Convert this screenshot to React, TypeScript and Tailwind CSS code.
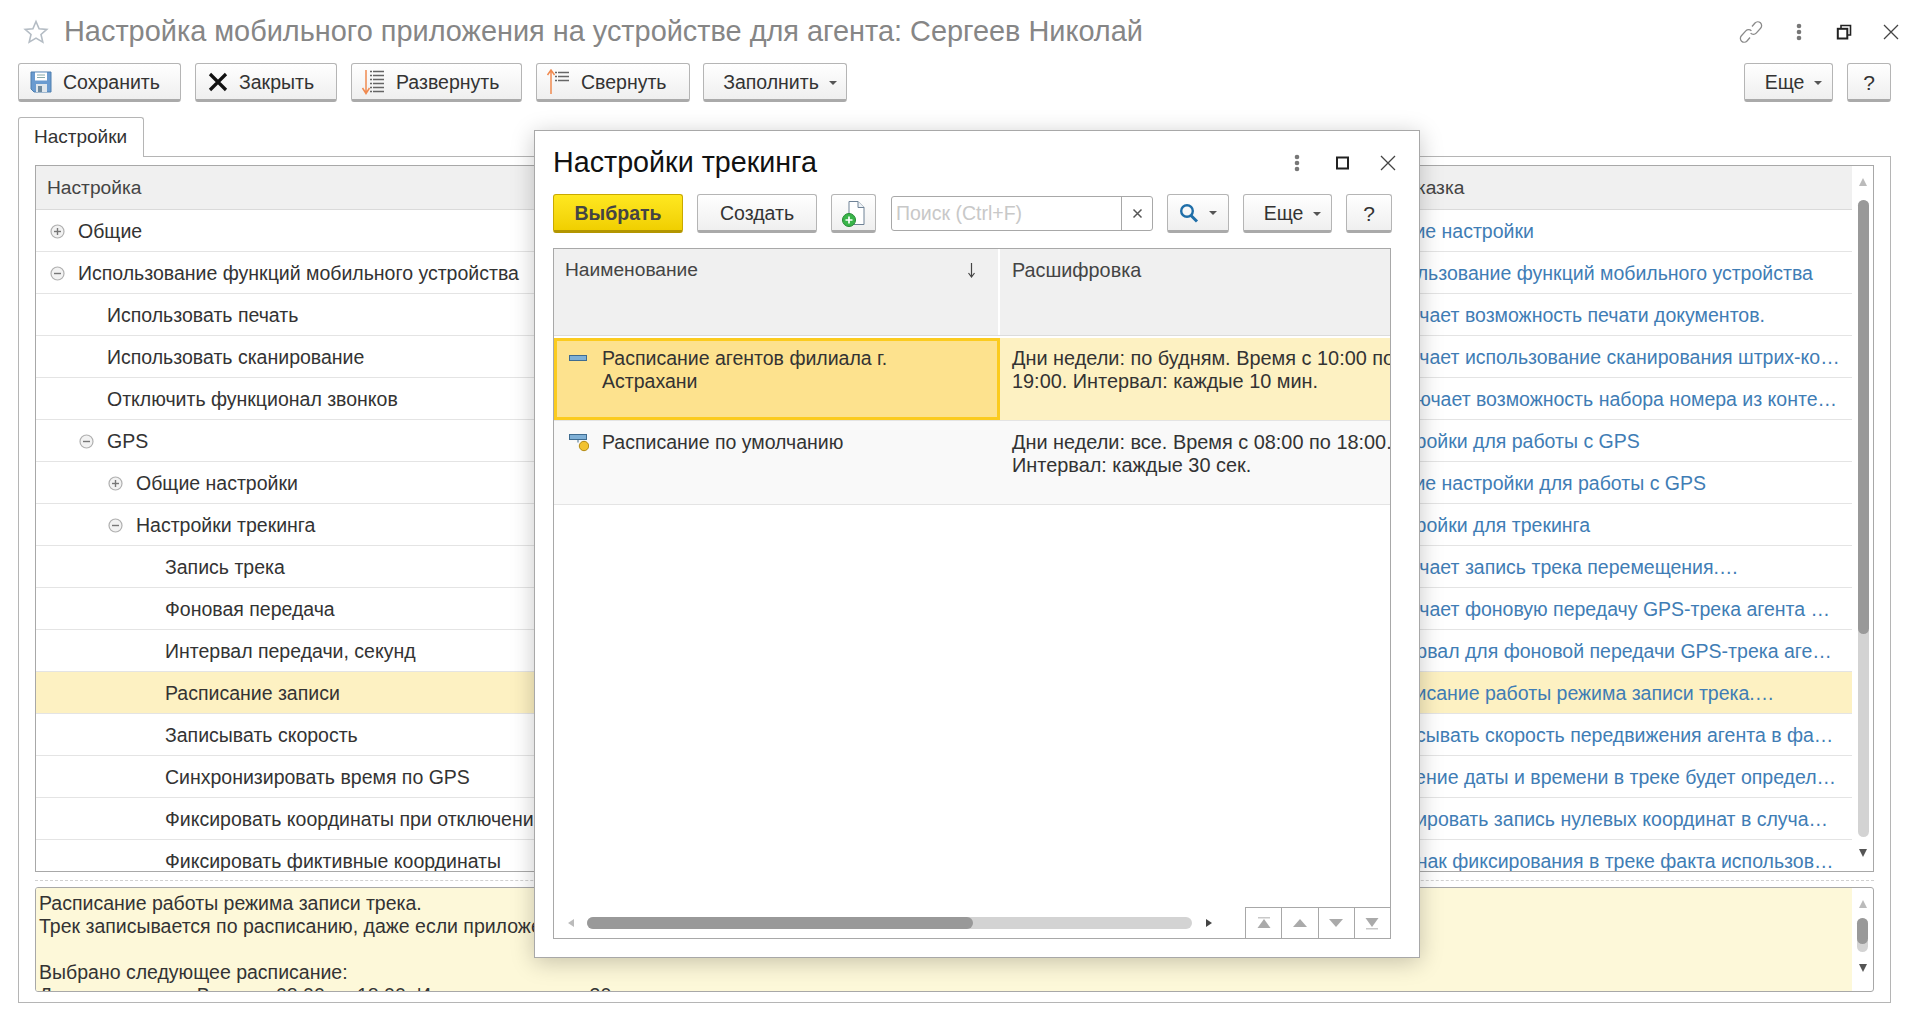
import type { ReactNode } from 'react';

const treeRows = [
  { label: 'Общие', level: 0, toggle: 'plus', hint: 'Общие настройки' },
  { label: 'Использование функций мобильного устройства', level: 0, toggle: 'minus', hint: 'Использование функций мобильного устройства' },
  { label: 'Использовать печать', level: 1, hint: 'Включает возможность печати документов.' },
  { label: 'Использовать сканирование', level: 1, hint: 'Включает использование сканирования штрих-ко…' },
  { label: 'Отключить функционал звонков', level: 1, hint: 'Отключает возможность набора номера из конте…' },
  { label: 'GPS', level: 1, toggle: 'minus', hint: 'Настройки для работы с GPS' },
  { label: 'Общие настройки', level: 2, toggle: 'plus', hint: 'Общие настройки для работы с GPS' },
  { label: 'Настройки трекинга', level: 2, toggle: 'minus', hint: 'Настройки для трекинга' },
  { label: 'Запись трека', level: 3, hint: 'Включает запись трека перемещения.…' },
  { label: 'Фоновая передача', level: 3, hint: 'Включает фоновую передачу GPS-трека агента …' },
  { label: 'Интервал передачи, секунд', level: 3, hint: 'Интервал для фоновой передачи GPS-трека аге…' },
  { label: 'Расписание записи', level: 3, hint: 'Расписание работы режима записи трека.…', selected: true },
  { label: 'Записывать скорость', level: 3, hint: 'Записывать скорость передвижения агента в фа…' },
  { label: 'Синхронизировать время по GPS', level: 3, hint: 'Значение даты и времени в треке будет определ…' },
  { label: 'Фиксировать координаты при отключении GPS', level: 3, hint: 'Фиксировать запись нулевых координат в случа…' },
  { label: 'Фиксировать фиктивные координаты', level: 3, hint: 'Признак фиксирования в треке факта использов…' },
];

const levelPadding = ['pl-[42px]', 'pl-[71px]', 'pl-[100px]', 'pl-[129px]'];
const togglePadding = ['pl-[14px]', 'pl-[43px]', 'pl-[72px]', 'pl-[101px]'];

function Btn({ className, children }: { className: string; children: ReactNode }) {
  return (
    <div
      className={`flex h-[39px] shrink-0 items-center rounded-[3px] border border-[#b5b5b5] border-b-[3px] border-b-[#aaaaaa] bg-gradient-to-b from-white to-[#efefef] pt-[2px] text-[19.5px] text-[#333] ${className}`}
    >
      {children}
    </div>
  );
}

function Caret() {
  return <span className="ml-[10px] h-0 w-0 border-x-[4px] border-t-[4px] border-x-transparent border-t-[#555]" />;
}

function Toggle({ type }: { type: string }) {
  return (
    <svg width="15" height="15" viewBox="0 0 15 15" className="shrink-0">
      <circle cx="7.5" cy="7.5" r="6.5" fill="#f2f2f2" stroke="#b0b0b0" strokeWidth="1.2" />
      <path d="M4 7.5h7" stroke="#777" strokeWidth="1.4" />
      {type === 'plus' && <path d="M7.5 4v7" stroke="#777" strokeWidth="1.4" />}
    </svg>
  );
}

function Dots() {
  return (
    <svg width="6" height="18" viewBox="0 0 6 18">
      <circle cx="3" cy="3" r="2.3" fill="#777" />
      <circle cx="3" cy="9" r="2.3" fill="#777" />
      <circle cx="3" cy="15" r="2.3" fill="#777" />
    </svg>
  );
}

function Cross({ size = 16 }: { size?: number }) {
  return (
    <svg width={size} height={size} viewBox="0 0 16 16">
      <path d="M1 1l14 14M15 1L1 15" stroke="#444" strokeWidth="1.3" />
    </svg>
  );
}

function ArrowUp({ color = '#bbb' }: { color?: string }) {
  return (
    <svg width="8" height="8" viewBox="0 0 8 8">
      <path d="M4 0l4 8H0z" fill={color} />
    </svg>
  );
}

function ArrowDown({ color = '#555' }: { color?: string }) {
  return (
    <svg width="8" height="8" viewBox="0 0 8 8">
      <path d="M0 0h8L4 8z" fill={color} />
    </svg>
  );
}

function ListIcon({ rows, top }: { rows: number; top: number }) {
  const lines = [];
  for (let i = 0; i < rows; i++) {
    lines.push(<path key={i} d={`M9 ${top + i * 4 + 0.5}h2M12 ${top + i * 4 + 0.5}h11`} stroke="#666" strokeWidth="1.6" />);
  }
  return <>{lines}</>;
}

function NavCell({ children }: { children: ReactNode }) {
  return (
    <div className="flex h-full flex-1 items-center justify-center border-l border-[#a8a8a8]">
      <svg width="18" height="16" viewBox="0 0 18 16">
        {children}
      </svg>
    </div>
  );
}

function TrackingDialog() {
  return (
    <div className="absolute left-[534px] top-[130px] flex h-[828px] w-[886px] flex-col border border-[#a8a8a8] bg-white pl-[18px] pr-[19px] shadow-[0_4px_22px_rgba(0,0,0,0.22)]">
      <div className="flex h-[63px] shrink-0 items-center justify-between">
        <div className="text-[28.7px] text-[#111]">Настройки трекинга</div>
        <div className="mr-[4px] flex items-center">
          <Dots />
          <svg width="14" height="14" viewBox="0 0 14 14" className="ml-[36px]">
            <rect x="1" y="1.5" width="11" height="11" fill="none" stroke="#222" strokeWidth="2" />
          </svg>
          <div className="ml-[30px]"><Cross /></div>
        </div>
      </div>

      <div className="flex h-[39px] shrink-0 items-start">
        <Btn className="w-[130px] justify-center !border-[#c9a900] !border-b-[#b39600] !from-[#ffe81f] !to-[#f0cf00] font-bold !text-[#444]">Выбрать</Btn>
        <Btn className="ml-[14px] w-[120px] justify-center">Создать</Btn>
        <Btn className="ml-[14px] w-[45px] justify-center !pt-0">
          <svg width="26" height="28" viewBox="0 0 26 28">
            <path d="M8 2.5h9l6 6v17H8z" fill="#fff" stroke="#6f8296" />
            <path d="M17 2.500v6h6" fill="#eef2f6" stroke="#6f8296" />
            <circle cx="8" cy="21" r="6.5" fill="#3ab54a" stroke="#258a33" />
            <path d="M4.500 21h7M8 17.500v7" stroke="#fff" strokeWidth="1.7" />
          </svg>
        </Btn>
        <div className="ml-[15px] mt-[2px] flex h-[35px] w-[262px] items-stretch rounded-[3px] border border-[#a8a8a8]">
          <div className="flex-1 pl-[4px] text-[19.5px] leading-[33px] text-[#c8c8c8]">Поиск (Ctrl+F)</div>
          <div className="flex w-[31px] items-center justify-center border-l border-[#a8a8a8]">
            <svg width="11" height="11" viewBox="0 0 11 11">
              <path d="M1.500 1.500l8 8M9.500 1.500l-8 8" stroke="#555" strokeWidth="1.5" />
            </svg>
          </div>
        </div>
        <Btn className="ml-[14px] w-[62px] justify-center !pt-0">
          <svg width="20" height="20" viewBox="0 0 20 20">
            <circle cx="8" cy="8" r="5.800" fill="none" stroke="#1f6ea8" strokeWidth="2.4" />
            <path d="M12 12.500l6 6" stroke="#1f6ea8" strokeWidth="3" />
          </svg>
          <Caret />
        </Btn>
        <Btn className="ml-[14px] w-[89px] justify-center pl-[10px]">Еще<Caret /></Btn>
        <Btn className="ml-[14px] w-[46px] justify-center text-[21px]">?</Btn>
      </div>

      <div className="mt-[15px] flex h-[691px] w-[838px] shrink-0 flex-col border border-[#a8a8a8]">
        <div className="grid h-[87px] shrink-0 grid-cols-[446px_1fr] border-b border-[#dcdcdc] bg-[#f0f0f0] text-[19.2px] leading-[22px] text-[#444]">
          <div className="flex justify-between border-r-2 border-white pl-[11px] pr-[22px] pt-[10px]">
            <span>Наименование</span>
            <svg width="9" height="16" viewBox="0 0 9 16" className="mt-[3px]">
              <path d="M4.500 1v13M1.500 11l3 4 3-4" fill="none" stroke="#444" strokeWidth="1.2" />
            </svg>
          </div>
          <div className="pl-[12px] pt-[10px] text-[19.8px]">Расшифровка</div>
        </div>

        <div className="mt-[2px] grid h-[82px] shrink-0 grid-cols-[446px_1fr] text-[19.5px] leading-[23px] text-[#333]">
          <div className="flex border-[3px] border-[#fbcb1f] bg-[#fde28e] pl-[12px] pt-[6px]">
            <svg width="20" height="12" viewBox="0 0 20 12" className="mt-[8px] shrink-0">
              <rect x="0.500" y="0.500" width="17" height="5" fill="#7fb0d6" stroke="#3f6c90" />
            </svg>
            <span className="ml-[13px] w-[340px]">Расписание агентов филиала г. Астрахани</span>
          </div>
          <div className="whitespace-pre overflow-hidden bg-[#fdf1c2] pl-[12px] pt-[9px] text-[19.9px]">{'Дни недели: по будням. Время с 10:00 по\n19:00. Интервал: каждые 10 мин.'}</div>
        </div>

        <div className="grid h-[85px] shrink-0 grid-cols-[446px_1fr] border-y border-[#e4e4e4] bg-[#f9f9f9] text-[19.5px] leading-[23px] text-[#333]">
          <div className="flex pl-[15px] pt-[10px]">
            <svg width="20" height="20" viewBox="0 0 20 20" className="mt-[3px] shrink-0">
              <rect x="0.500" y="0.500" width="17" height="5" fill="#7fb0d6" stroke="#3f6c90" />
              <path d="M9 5.500v3" stroke="#3f6c90" />
              <circle cx="15" cy="12" r="4.700" fill="#f2c230" stroke="#b38a12" />
            </svg>
            <span className="ml-[13px]">Расписание по умолчанию</span>
          </div>
          <div className="whitespace-pre overflow-hidden pl-[12px] pt-[10px] text-[19.9px]">{'Дни недели: все. Время с 08:00 по 18:00.\nИнтервал: каждые 30 сек.'}</div>
        </div>

        <div className="flex-1" />

        <div className="flex h-[31px] shrink-0 items-center">
          <div className="flex flex-1 items-center pl-[14px]">
            <svg width="6" height="8" viewBox="0 0 6 8"><path d="M6 0v8L0 4z" fill="#bbb" /></svg>
            <div className="ml-[13px] h-[12px] w-[605px] rounded-full bg-[#d3d3d3]">
              <div className="h-full w-[386px] rounded-full bg-[#999]" />
            </div>
            <svg width="6" height="8" viewBox="0 0 6 8" className="ml-[14px]"><path d="M0 0v8l6-4z" fill="#444" /></svg>
          </div>
          <div className="flex h-full w-[145px] border-t border-[#a8a8a8]">
            <NavCell><path d="M3 2h12v1.500H3z" fill="#c8c8c8" /><path d="M9 4l6.500 9h-13z" fill="#aaa" /></NavCell>
            <NavCell><path d="M9 4l7 8H2z" fill="#aaa" /></NavCell>
            <NavCell><path d="M2 4h14l-7 8z" fill="#aaa" /></NavCell>
            <NavCell><path d="M2.500 3h13L9 12z" fill="#aaa" /><path d="M3 13h12v1.500H3z" fill="#c8c8c8" /></NavCell>
          </div>
        </div>
      </div>
    </div>
  );
}

export default function App() {
  return (
    <div className="relative h-[1017px] w-[1920px] overflow-hidden bg-white font-['Liberation_Sans',Arial,sans-serif]">
      {/* Title */}
      <div className="flex h-[63px] items-center pl-[23px] pr-[21px]">
        <svg width="26" height="26" viewBox="0 0 26 26" className="shrink-0">
          <path d="M13 2.500l3.100 7.200 7.700.7-5.800 5.100 1.800 7.600-6.800-4-6.800 4 1.800-7.600-5.800-5.100 7.700-.7z" fill="none" stroke="#b4bcc4" strokeWidth="1.6" />
        </svg>
        <div className="ml-[15px] text-[28.9px] text-[#868686]">Настройка мобильного приложения на устройстве для агента: Сергеев Николай</div>
        <div className="ml-auto flex items-center">
          <svg width="26" height="26" viewBox="0 0 26 26" fill="none" stroke="#8a8a8a" strokeWidth="1.3">
            <path d="M14 7.500l3-3.500a3.800 3.800 0 0 1 5.600 5.200l-4.400 4.900a3.800 3.800 0 0 1-5.600 0" />
            <path d="M12 18.500l-3 3.500a3.800 3.800 0 0 1-5.600-5.200l4.400-4.900a3.800 3.800 0 0 1 5.600 0" />
          </svg>
          <div className="ml-[32px]"><Dots /></div>
          <svg width="16" height="16" viewBox="0 0 16 16" className="ml-[34px]">
            <path d="M5 4V1.500h9.500V11H12" fill="none" stroke="#222" strokeWidth="1.6" />
            <rect x="1.800" y="4.800" width="9.500" height="9.700" fill="none" stroke="#222" strokeWidth="2" />
          </svg>
          <div className="ml-[31px]"><Cross /></div>
        </div>
      </div>

      {/* Toolbar */}
      <div className="flex h-[39px] pl-[18px] pr-[29px]">
        <Btn className="w-[163px] pl-[11px] !pt-0">
          <svg width="22" height="22" viewBox="0 0 22 22" className="shrink-0">
            <path d="M1 1h20v20H4l-3-3z" fill="#6a9bd0" stroke="#4f7fae" />
            <rect x="5" y="1.500" width="12" height="8" fill="#fff" />
            <path d="M7 4h8M7 6.500h8" stroke="#8aa" strokeWidth="1" />
            <rect x="6" y="13" width="11" height="8" fill="#dfe6ec" />
            <rect x="8" y="15" width="4" height="6" fill="#6f8a9e" />
          </svg>
          <span className="ml-[11px] pt-[2px]">Сохранить</span>
        </Btn>
        <Btn className="ml-[14px] w-[142px] pl-[12px] !pt-0">
          <svg width="20" height="20" viewBox="0 0 20 20" className="shrink-0">
            <path d="M2 2l16 16M18 2L2 18" stroke="#111" strokeWidth="3.2" />
          </svg>
          <span className="ml-[11px] pt-[2px]">Закрыть</span>
        </Btn>
        <Btn className="ml-[14px] w-[171px] pl-[9px] !pt-0">
          <svg width="24" height="26" viewBox="0 0 24 26" className="shrink-0">
            <path d="M5 1v22M1.500 19L5 24.500 8.500 19" fill="none" stroke="#f08a50" strokeWidth="1.5" />
            <ListIcon rows={6} top={2} />
          </svg>
          <span className="ml-[11px] pt-[2px]">Развернуть</span>
        </Btn>
        <Btn className="ml-[14px] w-[154px] pl-[9px] !pt-0">
          <svg width="24" height="26" viewBox="0 0 24 26" className="shrink-0">
            <path d="M5 25V2M1.500 6L5 1l3.500 5" fill="none" stroke="#f08a50" strokeWidth="1.5" />
            <ListIcon rows={3} top={3} />
          </svg>
          <span className="ml-[11px] pt-[2px]">Свернуть</span>
        </Btn>
        <Btn className="ml-[13px] w-[144px] justify-center pl-[10px]">Заполнить<Caret /></Btn>
        <Btn className="ml-auto w-[89px] justify-center pl-[10px]">Еще<Caret /></Btn>
        <Btn className="ml-[14px] w-[44px] justify-center text-[21px]">?</Btn>
      </div>

      {/* Tab */}
      <div className="relative z-10 ml-[18px] mt-[15px] h-[40px] w-[126px] rounded-t-[3px] border border-b-0 border-[#b5b5b5] bg-white pl-[15px] text-[19px] leading-[38px] text-[#333]">Настройки</div>

      {/* Panel */}
      <div className="-mt-px ml-[18px] flex h-[847px] w-[1873px] flex-col border border-[#b5b5b5] px-[16px] pt-[8px]">
        <div className="flex h-[707px] shrink-0 border border-[#a8a8a8]">
          <div className="min-w-0 flex-1 overflow-hidden">
            <div className="grid h-[44px] grid-cols-[1324px_1fr] border-b border-[#dadada] bg-[#f0f0f0] text-[19.2px] leading-[44px] text-[#444]">
              <div className="pl-[11px]">Настройка</div>
              <div className="pl-[12px]">Подсказка</div>
            </div>
            {treeRows.map((row) => (
              <div
                key={row.label}
                className={`grid h-[42px] grid-cols-[1324px_1fr] border-b border-[#e4e4e4] text-[19.5px] leading-[42px] ${row.selected ? 'bg-[#fdf1c2]' : ''}`}
              >
                <div className={`relative whitespace-nowrap text-[#333] ${levelPadding[row.level]}`}>
                  {row.toggle && (
                    <div className={`absolute inset-y-0 left-0 flex items-center ${togglePadding[row.level]}`}>
                      <Toggle type={row.toggle} />
                    </div>
                  )}
                  {row.label}
                </div>
                <div className="overflow-hidden whitespace-nowrap pl-[12px] text-[#3f7db5]">{row.hint}</div>
              </div>
            ))}
          </div>
          <div className="flex w-[21px] shrink-0 flex-col items-center pl-[1px] pt-[12px]">
            <ArrowUp />
            <div className="mt-[14px] h-[637px] w-[11px] rounded-full bg-[#d3d3d3]">
              <div className="h-[434px] rounded-full bg-[#999]" />
            </div>
            <div className="mt-[12px]"><ArrowDown /></div>
          </div>
        </div>

        <div className="mt-[8px] border-t border-dashed border-[#d0d0d0]" />

        <div className="mt-[6px] flex h-[105px] shrink-0 overflow-hidden rounded-[3px] border border-[#a8a8a8]">
          <div className="min-w-0 flex-1 overflow-hidden bg-[#fdf8d9] pl-[3px] pt-[4px] text-[19.5px] leading-[23px] text-[#333]">
            <div>Расписание работы режима записи трека.</div>
            <div>Трек записывается по расписанию, даже если приложение закрыто.</div>
            <div className="h-[23px]" />
            <div>Выбрано следующее расписание:</div>
            <div>Дни недели: все. Время с 08:00 по 18:00. Интервал: каждые 30 сек.</div>
          </div>
          <div className="flex w-[21px] shrink-0 flex-col items-center pt-[12px]">
            <ArrowUp />
            <div className="mt-[10px] h-[34px] w-[11px] rounded-full bg-[#d3d3d3]">
              <div className="h-[26px] rounded-full bg-[#999]" />
            </div>
            <div className="mt-[12px]"><ArrowDown /></div>
          </div>
        </div>
      </div>

      <TrackingDialog />
    </div>
  );
}
